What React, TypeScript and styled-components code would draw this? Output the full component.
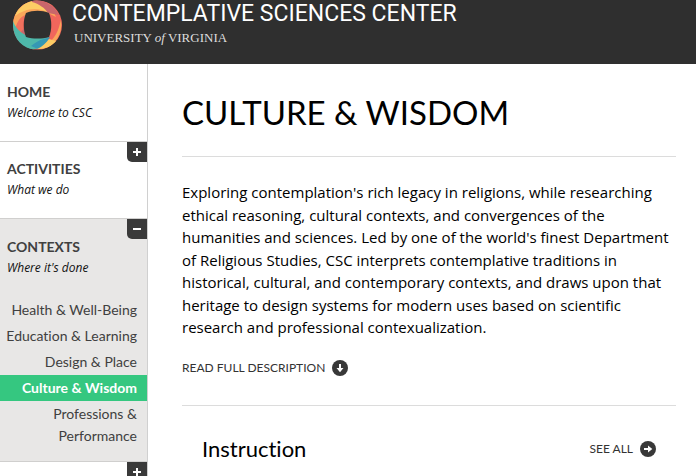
import React from "react";
import styled, { createGlobalStyle } from "styled-components";

const GlobalStyle = createGlobalStyle`
  *, *::before, *::after { box-sizing: border-box; font-variant-ligatures: none !important; }
  body { margin: 0; background: #fff; color: #000; font-family: "Open Sans", sans-serif; overflow: hidden; }
  h1, h2, p, ul { margin: 0; padding: 0; }
  ul { list-style: none; }
  a { color: inherit; text-decoration: none; }
  button { border: 0; padding: 0; margin: 0; cursor: pointer; }
`;

const Header = styled.header`
  display: flex;
  align-items: flex-start;
  gap: 9px;
  height: 64px;
  padding-left: 12px;
  background: #2f2f2f;
  color: #fff;
`;

const Logo = styled.svg`
  flex: none;
  width: 51px;
  height: 50px;
`;

const Brand = styled.a`
  display: block;
  white-space: nowrap;
`;

const BrandName = styled.span`
  display: block;
  font: 400 23px/28px "Roboto", sans-serif;
  word-spacing: normal;
`;

const BrandSchool = styled.span`
  display: block;
  padding-left: 2px;
  font: 400 13px/20px "Liberation Serif", serif;
  color: #ddd;
`;

const Page = styled.div`
  display: grid;
  grid-template-columns: 148px 1fr;
  height: calc(100vh - 64px);
`;

const Sidebar = styled.nav`
  padding-top: 1px;
  overflow: hidden;
  border-right: 1px solid #d0d0d0;
`;

const Section = styled.section<{ $open?: boolean }>`
  position: relative;
  min-height: 77px;
  padding-top: ${(p) => (p.$open ? 18 : 17)}px;
  border-bottom: 1px solid #d0cfce;
  background: ${(p) => (p.$open ? "#e8e7e6" : "#fff")};
`;

const SectionLink = styled.a`
  display: block;
  padding-left: 7px;
`;

const SectionTitle = styled.span`
  display: block;
  font: 700 14px/20px "Lato", sans-serif;
  color: #404040;
`;

const SectionNote = styled.span`
  display: block;
  font: italic 400 12px/22px "Open Sans", sans-serif;
  color: #111;
`;

const Toggle = styled.button`
  position: absolute;
  top: 0;
  right: 0;
  display: grid;
  place-items: center;
  width: 20px;
  height: 20px;
  border-radius: 0 0 0 5px;
  background: #3a3a3a;
`;

const SubList = styled.ul`
  padding: 18px 0 12px;
`;

const SubLink = styled.a<{ $active?: boolean }>`
  display: block;
  padding: 2px 10px 2px 2px;
  text-align: right;
  font: ${(p) => (p.$active ? 700 : 400)} 14px/22px "Lato", sans-serif;
  color: ${(p) => (p.$active ? "#fff" : "#404040")};
  background: ${(p) => (p.$active ? "#35c780" : "transparent")};
`;

const Main = styled.main`
  padding: 0 20px 0 34px;
`;

const Title = styled.h1`
  padding: 27px 0 23px;
  font: 400 33px/42px "Lato", sans-serif;
  border-bottom: 1px solid #dcdcdc;
`;

const Intro = styled.div`
  padding: 24px 0 28px;
  border-bottom: 1px solid #dcdcdc;
`;

const Description = styled.p`
  max-width: 490px;
  font-size: 15px;
  line-height: 1.5;
`;

const MoreLink = styled.a`
  display: inline-flex;
  align-items: center;
  gap: 7px;
  font: 400 12px/18px "Lato", sans-serif;
  color: #333;
`;

const IntroMore = styled(MoreLink)`
  display: flex;
  margin-top: 20px;
`;

const Block = styled.section`
  display: flex;
  align-items: center;
  justify-content: space-between;
  padding: 28px 20px 12px;
`;

const BlockTitle = styled.h2`
  font: 400 22px/30px "Lato", sans-serif;
`;

const LogoMark = () => (
  <Logo viewBox="0 0 51 50" aria-hidden="true">
    <circle cx="25.5" cy="25" r="24.5" fill="#f1665c" />
    <path d="M1 24C2 10 12 1 25 1l13 3 6 13-6-3C26 9 17 12 12 17L3 28z" fill="#fba65a" />
    <path d="M3 16C8 5 17 0 26 1l14 9-2 3C24 6 13 9 3 16z" fill="#fdcc65" />
    <path d="M20 1c12-2 22 4 27 14L36 13C33 8 27 4 20 2z" fill="#c9666b" />
    <path d="M3 31c1-8 5-14 10-16-3 9-2 17 1 23z" fill="#f1705d" />
    <path d="M13 27l-4 5 6 6z" fill="#c9666b" />
    <path d="M49 20c2 14-6 27-20 29h-5c13-3 20-12 23-22z" fill="#fba65a" />
    <path d="M1 21c3 9 11 16 24 17l12-1C33 45 27 50 19 49 7 46 0 35 1 21z" fill="#4eb8aa" />
    <path d="M19 46c4-3 8-6 13-7l6-2c-3 6-7 10-12 12z" fill="#3598b4" />
    <path d="M25 49c5-2 9-6 12-10l7 2c-4 5-10 8-19 8z" fill="#fdcc65" />
    <path d="M14 13c7-3 16-3 23 0 3 7 3 17 0 24-7 2-16 2-23 0-3-7-3-17 0-24z" fill="#2f2f2f" />
  </Logo>
);

const ToggleIcon = ({ open }: { open?: boolean }) => (
  <svg width="8" height="8" viewBox="0 0 8 8" fill="#fff" aria-hidden="true">
    <path d={open ? "M0 3h8v2H0z" : "M0 3h3V0h2v3h3v2H5v3H3V5H0z"} />
  </svg>
);

const ArrowIcon = ({ down }: { down?: boolean }) => (
  <svg width="16" height="16" viewBox="0 0 16 16" aria-hidden="true">
    <circle cx="8" cy="8" r="8" fill="#383838" />
    <path
      d="M4 7h4V4.5L12.3 8 8 11.5V9H4z"
      fill="#fff"
      transform={down ? "rotate(90 8 8)" : undefined}
    />
  </svg>
);

const contextLinks = [
  "Health & Well-Being",
  "Education & Learning",
  "Design & Place",
  "Culture & Wisdom",
  "Professions & Performance",
];

type NavSectionProps = {
  title: string;
  note: string;
  collapsible?: boolean;
  links?: string[];
};

const NavSection = ({ title, note, collapsible, links }: NavSectionProps) => (
  <Section $open={!!links}>
    <SectionLink href="#">
      <SectionTitle>{title}</SectionTitle>
      <SectionNote>{note}</SectionNote>
    </SectionLink>
    {collapsible && (
      <Toggle type="button" aria-label={title} aria-expanded={!!links}>
        <ToggleIcon open={!!links} />
      </Toggle>
    )}
    {links && (
      <SubList>
        {links.map((label) => (
          <li key={label}>
            <SubLink href="#" $active={label === "Culture & Wisdom"}>
              {label}
            </SubLink>
          </li>
        ))}
      </SubList>
    )}
  </Section>
);

export default function App() {
  return (
    <>
      <GlobalStyle />
      <Header>
        <LogoMark />
        <Brand href="#">
          <BrandName>CONTEMPLATIVE SCIENCES CENTER</BrandName>
          <BrandSchool>
            UNIVERSITY <em>of</em> VIRGINIA
          </BrandSchool>
        </Brand>
      </Header>
      <Page>
        <Sidebar>
          <NavSection title="HOME" note="Welcome to CSC" />
          <NavSection title="ACTIVITIES" note="What we do" collapsible />
          <NavSection title="CONTEXTS" note="Where it's done" collapsible links={contextLinks} />
          <Section as="div">
            <Toggle type="button" aria-label="Expand" aria-expanded={false}>
              <ToggleIcon />
            </Toggle>
          </Section>
        </Sidebar>
        <Main>
          <Title>CULTURE &amp; WISDOM</Title>
          <Intro>
            <Description>
              Exploring contemplation's rich legacy in religions, while researching ethical
              reasoning, cultural contexts, and convergences of the humanities and sciences. Led by
              one of the world's finest Department of Religious Studies, CSC interprets
              contemplative traditions in historical, cultural, and contemporary contexts, and draws
              upon that heritage to design systems for modern uses based on scientific research and
              professional contexualization.
            </Description>
            <IntroMore href="#">
              READ FULL DESCRIPTION
              <ArrowIcon down />
            </IntroMore>
          </Intro>
          <Block>
            <BlockTitle>Instruction</BlockTitle>
            <MoreLink href="#">
              SEE ALL
              <ArrowIcon />
            </MoreLink>
          </Block>
        </Main>
      </Page>
    </>
  );
}
